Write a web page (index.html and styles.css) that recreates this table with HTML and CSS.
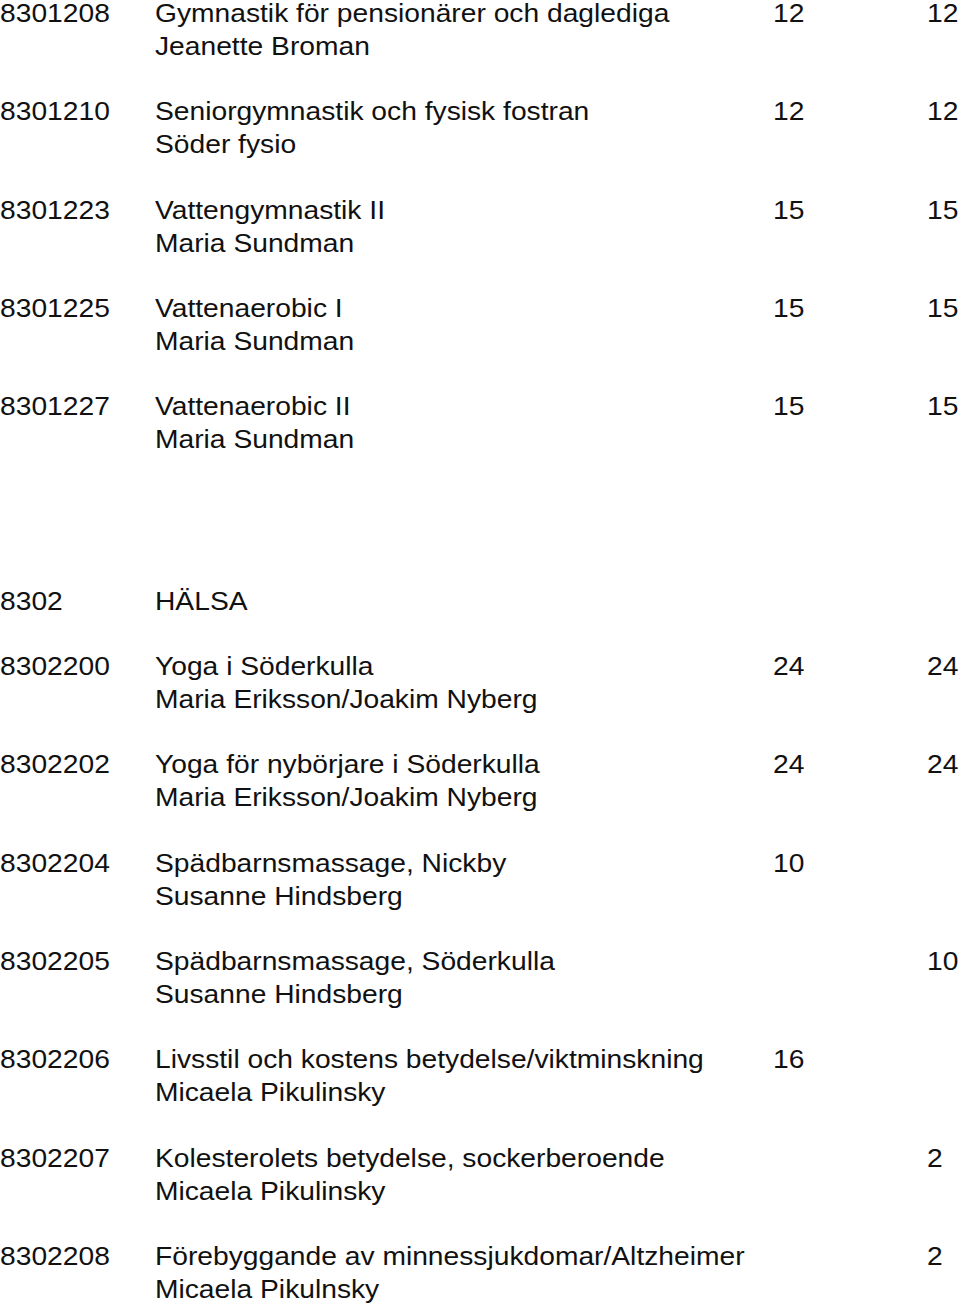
FILE: index.html
```html
<!DOCTYPE html>
<html lang="sv">
<head>
<meta charset="utf-8">
<title>Kurslista</title>
<link rel="stylesheet" href="styles.css">
</head>
<body>
<div class="list">
  <div class="row"><div class="code">8301208</div><div class="desc">Gymnastik för pensionärer och daglediga<br>Jeanette Broman</div><div class="n1">12</div><div class="n2">12</div></div>
  <div class="row"><div class="code">8301210</div><div class="desc">Seniorgymnastik och fysisk fostran<br>Söder fysio</div><div class="n1">12</div><div class="n2">12</div></div>
  <div class="row"><div class="code">8301223</div><div class="desc">Vattengymnastik II<br>Maria Sundman</div><div class="n1">15</div><div class="n2">15</div></div>
  <div class="row"><div class="code">8301225</div><div class="desc">Vattenaerobic I<br>Maria Sundman</div><div class="n1">15</div><div class="n2">15</div></div>
  <div class="row"><div class="code">8301227</div><div class="desc">Vattenaerobic II<br>Maria Sundman</div><div class="n1">15</div><div class="n2">15</div></div>
  <div class="row spacer"></div>
  <div class="row"><div class="code">8302</div><div class="desc">HÄLSA</div><div class="n1"></div><div class="n2"></div></div>
  <div class="row"><div class="code">8302200</div><div class="desc">Yoga i Söderkulla<br>Maria Eriksson/Joakim Nyberg</div><div class="n1">24</div><div class="n2">24</div></div>
  <div class="row"><div class="code">8302202</div><div class="desc">Yoga för nybörjare i Söderkulla<br>Maria Eriksson/Joakim Nyberg</div><div class="n1">24</div><div class="n2">24</div></div>
  <div class="row"><div class="code">8302204</div><div class="desc">Spädbarnsmassage, Nickby<br>Susanne Hindsberg</div><div class="n1">10</div><div class="n2"></div></div>
  <div class="row"><div class="code">8302205</div><div class="desc">Spädbarnsmassage, Söderkulla<br>Susanne Hindsberg</div><div class="n1"></div><div class="n2">10</div></div>
  <div class="row"><div class="code">8302206</div><div class="desc">Livsstil och kostens betydelse/viktminskning<br>Micaela Pikulinsky</div><div class="n1">16</div><div class="n2"></div></div>
  <div class="row"><div class="code">8302207</div><div class="desc">Kolesterolets betydelse, sockerberoende<br>Micaela Pikulinsky</div><div class="n1"></div><div class="n2">2</div></div>
  <div class="row"><div class="code">8302208</div><div class="desc">Förebyggande av minnessjukdomar/Altzheimer<br>Micaela Pikulnsky</div><div class="n1"></div><div class="n2">2</div></div>
</div>
</body>
</html>
```

FILE: styles.css
```css
html, body {
  margin: 0;
  padding: 0;
  background: #ffffff;
}
body {
  font-family: "Liberation Sans", Arial, Helvetica, sans-serif;
  font-size: 26px;
  line-height: 33px;
  color: #111111;
}
.list {
  margin-top: -3px;
}
.row {
  display: grid;
  grid-template-columns: 155px 618px 154px 1fr;
  margin-bottom: 32.3px;
  white-space: nowrap;
}
.row > div {
  transform: scaleX(1.085);
  transform-origin: left center;
}
.row.spacer {
  height: 64px;
}
```
